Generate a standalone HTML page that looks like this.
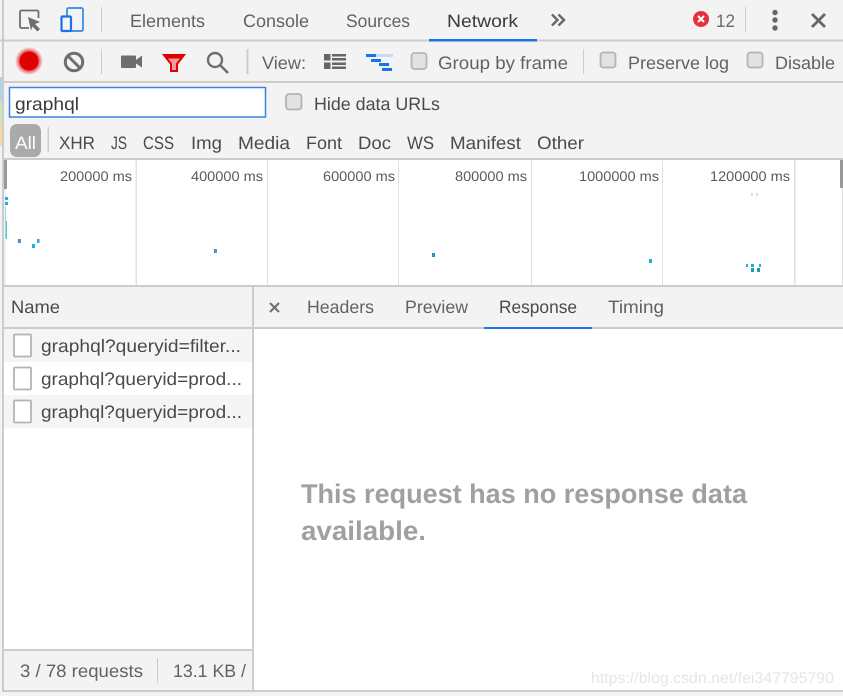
<!DOCTYPE html>
<html><head><meta charset="utf-8"><style>
html,body{margin:0;padding:0;background:#f3f3f3;overflow:hidden}
svg{display:block}
text{font-family:"Liberation Sans",sans-serif;font-size:18px;fill:#4a4a4a;text-rendering:geometricPrecision}
.t{fill:#626262}.g{fill:#6a6a6a}.d{fill:#3a3a3a}
.s{font-size:14px;fill:#5a5a5a}
</style></head><body>
<svg width="843" height="696" viewBox="0 0 843 696" xmlns="http://www.w3.org/2000/svg">
<defs><radialGradient id="h"><stop offset="68%" stop-color="#e00000" stop-opacity=".65"/><stop offset="100%" stop-color="#e00000" stop-opacity="0"/></radialGradient></defs>
<rect width="843" height="696" fill="#f3f3f3"/>
<rect x="0" y="77" width="2" height="24" fill="#a8d4f5"/><rect x="0" y="101" width="2" height="25" fill="#cfe3b5"/><rect x="0" y="126" width="2" height="20" fill="#fbd9a0"/>
<rect x="2" y="0" width="2" height="692" fill="#ccc"/>
<rect x="0" y="39.5" width="843" height="2" fill="#ccc"/>
<rect x="2" y="81" width="841" height="2" fill="#ccc"/>
<rect x="2" y="158" width="841" height="2" fill="#ccc"/>

<!-- toolbar 1 -->
<path d="M29 28H21.500a1.500 1.500 0 0 1-1.500-1.500V12A1.500 1.500 0 0 1 21.500 10.500H37a1.500 1.500 0 0 1 1.500 1.500V18" fill="none" stroke="#6e6e6e" stroke-width="1.800"/>
<path d="M28 17l12 5-5 2 5 5-2.500 2.500-5-5-1.500 4z" fill="#6e6e6e"/>
<rect x="67" y="8" width="16" height="23" rx="1.500" fill="none" stroke="#2f86ea" stroke-width="1.700"/>
<rect x="61.500" y="16.500" width="9.500" height="14.500" rx="1" fill="#f3f3f3" stroke="#1a73e8" stroke-width="2.200"/>
<rect x="101" y="7" width="1" height="25" fill="#ccc"/>
<text x="130" y="27" textLength="75" lengthAdjust="spacingAndGlyphs" class="t">Elements</text>
<text x="243" y="27" textLength="66" lengthAdjust="spacingAndGlyphs" class="t">Console</text>
<text x="346" y="27" textLength="64" lengthAdjust="spacingAndGlyphs" class="t">Sources</text>
<text x="447" y="27" textLength="71" lengthAdjust="spacingAndGlyphs" class="d">Network</text>
<rect x="429" y="39" width="108" height="2.500" fill="#1a73e8"/>
<path d="M552 14.500l5.500 5.500-5.500 5.500M558.500 14.500l5.500 5.500-5.500 5.500" fill="none" stroke="#666" stroke-width="2.400"/>
<circle cx="701" cy="19" r="8" fill="#e8303c"/>
<path d="M698 16l6 6m0-6l-6 6" stroke="#fff" stroke-width="2"/>
<text x="716" y="27" textLength="19" lengthAdjust="spacingAndGlyphs" class="g">12</text>
<rect x="745" y="7" width="1" height="25" fill="#ccc"/>
<circle cx="775" cy="12.500" r="2.700" fill="#666"/><circle cx="775" cy="20" r="2.700" fill="#666"/><circle cx="775" cy="28" r="2.700" fill="#666"/>
<path d="M812 14l13 13m0-13l-13 13" stroke="#666" stroke-width="2.800"/>

<!-- toolbar 2 -->
<circle cx="29" cy="61" r="14" fill="url(#h)"/><circle cx="29" cy="61" r="9.500" fill="#e00000"/>
<circle cx="74" cy="62" r="8.700" fill="none" stroke="#6e6e6e" stroke-width="3"/><path d="M68 56l12 12" stroke="#6e6e6e" stroke-width="3"/>
<rect x="101" y="49" width="1" height="25" fill="#ccc"/>
<rect x="121" y="55.500" width="15" height="12.500" rx="1" fill="#6e6e6e"/><path d="M136 60l6-4.500v12l-6-4z" fill="#6e6e6e"/>
<path d="M164 55h20l-7 9v7h-6v-7z" fill="#f49a9a" stroke="#e00000" stroke-width="2"/><path d="M164 55h20l-3 3.500h-14z" fill="#e00000"/>
<circle cx="215" cy="60" r="7" fill="none" stroke="#6e6e6e" stroke-width="2.400"/><path d="M220 65l8 8" stroke="#6e6e6e" stroke-width="2.600"/>
<rect x="246.500" y="49" width="2" height="25" fill="#ccc"/>
<text x="262" y="69" textLength="44" lengthAdjust="spacingAndGlyphs" class="t">View:</text>
<g fill="#666"><rect x="324" y="54" width="6.500" height="6.500"/><rect x="324" y="62.500" width="6.500" height="6.500"/><rect x="332" y="54" width="14" height="2.500"/><rect x="332" y="58" width="14" height="2.500"/><rect x="332" y="62.500" width="14" height="2.500"/><rect x="332" y="66.500" width="14" height="2.500"/></g>
<rect x="376" y="54" width="17" height="3" fill="#c6dcf6"/><rect x="366" y="54" width="10" height="3" fill="#1a73e8"/><rect x="371" y="59" width="10" height="3" fill="#1a73e8"/><rect x="379" y="63" width="10" height="3" fill="#1a73e8"/><rect x="382" y="68" width="10" height="3" fill="#1a73e8"/>
<g fill="#e2e2e2" stroke="#b4b4b4" stroke-width="1.800"><rect x="411.500" y="53" width="15" height="16" rx="3"/><rect x="600.500" y="52.500" width="15" height="15" rx="3"/><rect x="747.500" y="52.500" width="15" height="15" rx="3"/><rect x="286" y="94" width="15.500" height="15.500" rx="3"/></g>
<text x="438" y="69" textLength="130" lengthAdjust="spacingAndGlyphs" class="t">Group by frame</text>
<rect x="583" y="49" width="1" height="25" fill="#ccc"/>
<text x="628" y="69" textLength="101" lengthAdjust="spacingAndGlyphs" class="t">Preserve log</text>
<text x="775" y="69" textLength="60" lengthAdjust="spacingAndGlyphs" class="t">Disable</text>

<!-- filter row -->
<rect x="9.500" y="87.500" width="256" height="29.500" fill="#fff" stroke="#3b83e0" stroke-width="1.500"/>
<text x="15" y="110" textLength="64" lengthAdjust="spacingAndGlyphs" class="d">graphql</text>
<text x="314" y="110" textLength="126" lengthAdjust="spacingAndGlyphs">Hide data URLs</text>
<rect x="10" y="124" width="31" height="33" rx="7" fill="#aaa"/>
<text x="15" y="149" textLength="21" lengthAdjust="spacingAndGlyphs" style="fill:#fff">All</text>
<rect x="47.500" y="127" width="1.500" height="25" fill="#ccc"/>
<text x="59" y="149" textLength="36" lengthAdjust="spacingAndGlyphs">XHR</text>
<text x="111" y="149" textLength="16" lengthAdjust="spacingAndGlyphs">JS</text>
<text x="143" y="149" textLength="31" lengthAdjust="spacingAndGlyphs">CSS</text>
<text x="191" y="149" textLength="31" lengthAdjust="spacingAndGlyphs">Img</text>
<text x="238" y="149" textLength="52" lengthAdjust="spacingAndGlyphs">Media</text>
<text x="306" y="149" textLength="36" lengthAdjust="spacingAndGlyphs">Font</text>
<text x="358" y="149" textLength="33" lengthAdjust="spacingAndGlyphs">Doc</text>
<text x="407" y="149" textLength="27" lengthAdjust="spacingAndGlyphs">WS</text>
<text x="450" y="149" textLength="71" lengthAdjust="spacingAndGlyphs">Manifest</text>
<text x="537" y="149" textLength="47" lengthAdjust="spacingAndGlyphs">Other</text>

<!-- timeline -->
<rect x="6" y="160" width="836" height="125" fill="#fff"/>
<g fill="#e0e0e0"><rect x="135.500" y="160" width="1.500" height="125"/><rect x="267" y="160" width="1" height="125"/><rect x="398" y="160" width="1" height="125"/><rect x="531" y="160" width="1" height="125"/><rect x="662" y="160" width="1" height="125"/><rect x="794" y="160" width="1.500" height="125"/></g>
<rect x="4" y="160" width="3" height="29" fill="#999"/><rect x="840" y="160" width="3" height="28" fill="#999"/><rect x="842" y="188" width="1" height="97" fill="#ddd"/>
<rect x="4" y="189" width="2" height="96" fill="#f0f0f0"/>
<text x="132" y="181" text-anchor="end" textLength="72" lengthAdjust="spacingAndGlyphs" class="s">200000 ms</text>
<text x="263" y="181" text-anchor="end" textLength="72" lengthAdjust="spacingAndGlyphs" class="s">400000 ms</text>
<text x="395" y="181" text-anchor="end" textLength="72" lengthAdjust="spacingAndGlyphs" class="s">600000 ms</text>
<text x="527" y="181" text-anchor="end" textLength="72" lengthAdjust="spacingAndGlyphs" class="s">800000 ms</text>
<text x="659" y="181" text-anchor="end" textLength="80" lengthAdjust="spacingAndGlyphs" class="s">1000000 ms</text>
<text x="790" y="181" text-anchor="end" textLength="80" lengthAdjust="spacingAndGlyphs" class="s">1200000 ms</text>
<g fill="#1eb2d8">
<rect x="5" y="197" width="3" height="3" fill="#1aaee8"/><rect x="5" y="202" width="3" height="3" fill="#1aaee8"/><rect x="5" y="207" width="1" height="14" fill="#9bd8e4"/><rect x="5.500" y="221" width="1.500" height="18" fill="#4cc4dc"/>
<rect x="18" y="239" width="3" height="4"/><rect x="32" y="244" width="3" height="4"/><rect x="37" y="239" width="2.500" height="4"/>
<rect x="214" y="249" width="3" height="4"/><rect x="432" y="253" width="3" height="4" fill="#1a9cb8"/><rect x="649" y="259" width="3" height="4"/>
<rect x="746" y="264" width="2" height="3"/><rect x="751" y="264" width="3" height="3"/><rect x="759" y="264" width="2" height="3"/><rect x="751" y="268" width="3" height="4" fill="#1a9cb8"/><rect x="757" y="268" width="3" height="4" fill="#1a9cb8"/>
</g>
<rect x="18" y="239" width="1" height="4" fill="#c04a80"/><rect x="214" y="249" width="1" height="4" fill="#c04a80"/>
<rect x="751" y="193" width="2" height="3" fill="#ddd"/><rect x="756" y="193" width="2" height="3" fill="#ddd"/>
<rect x="2" y="285" width="841" height="2" fill="#ccc"/>

<!-- main -->
<rect x="254" y="329" width="589" height="361" fill="#fff"/>
<rect x="4" y="329" width="248" height="320" fill="#fff"/>
<rect x="4" y="329" width="248" height="33" fill="#f5f5f5"/>
<rect x="4" y="395" width="248" height="33" fill="#f5f5f5"/>
<rect x="252" y="287" width="2" height="405" fill="#ccc"/>
<rect x="2" y="327" width="841" height="2" fill="#ccc"/>
<text x="11" y="313" textLength="49" lengthAdjust="spacingAndGlyphs">Name</text>
<path d="M270 303l9 9m0-9l-9 9" stroke="#6e6e6e" stroke-width="2"/>
<text x="307" y="313" textLength="67" lengthAdjust="spacingAndGlyphs" class="t">Headers</text>
<text x="405" y="313" textLength="63" lengthAdjust="spacingAndGlyphs" class="t">Preview</text>
<text x="499" y="313" textLength="78" lengthAdjust="spacingAndGlyphs">Response</text>
<text x="608" y="313" textLength="56" lengthAdjust="spacingAndGlyphs" class="t">Timing</text>
<rect x="484" y="327" width="108" height="2" fill="#1a73e8"/>
<g fill="#fff" stroke="#b4b4b4" stroke-width="1.800"><rect x="14" y="334.500" width="17" height="22" rx="1"/><rect x="14" y="367.500" width="17" height="22" rx="1"/><rect x="14" y="400.500" width="17" height="22" rx="1"/></g>
<text x="41" y="352" textLength="200" lengthAdjust="spacingAndGlyphs">graphql?queryid=filter...</text>
<text x="41" y="385" textLength="201" lengthAdjust="spacingAndGlyphs">graphql?queryid=prod...</text>
<text x="41" y="418" textLength="201" lengthAdjust="spacingAndGlyphs">graphql?queryid=prod...</text>
<text x="301" y="503" textLength="446" lengthAdjust="spacingAndGlyphs" style="font-size:27px;font-weight:700;fill:#a0a0a0">This request has no response data</text>
<text x="301" y="540" textLength="125" lengthAdjust="spacingAndGlyphs" style="font-size:27px;font-weight:700;fill:#a0a0a0">available.</text>

<!-- footer -->
<rect x="4" y="651" width="248" height="39" fill="#f3f3f3"/>
<rect x="2" y="649" width="250" height="2" fill="#ccc"/>
<rect x="2" y="690" width="841" height="2" fill="#ccc"/>
<text x="20" y="677" textLength="123" lengthAdjust="spacingAndGlyphs" class="t">3 / 78 requests</text>
<rect x="157" y="658" width="1" height="25" fill="#ccc"/>
<text x="173" y="677" textLength="73" lengthAdjust="spacingAndGlyphs" class="t">13.1 KB /</text>
<text x="591" y="683" textLength="243" lengthAdjust="spacingAndGlyphs" style="font-size:15.500px;fill:#e6e6e6">https://blog.csdn.net/fei347795790</text>
</svg>
</body></html>
